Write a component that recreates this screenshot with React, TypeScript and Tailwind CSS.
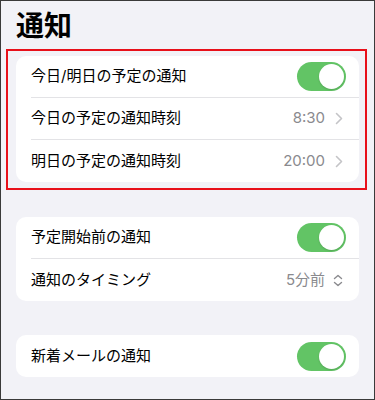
import React from "react";

const font = { fontFamily: 'Inter, "Noto Sans CJK JP", sans-serif' };

function Toggle() {
  return (
    <div className="w-[49px] h-[29px] rounded-full bg-[#62c465] flex items-center justify-end px-[2px]">
      <div className="w-[25px] h-[25px] rounded-full bg-white shadow-[0_1px_2px_rgba(0,0,0,0.15)]" />
    </div>
  );
}

function Chevron() {
  return (
    <svg width="8" height="13" viewBox="0 0 8 13" className="ml-[10px]">
      <path d="M1.5 1.5 L6.5 6.5 L1.5 11.5" fill="none" stroke="#c4c4c7" strokeWidth="1.6" strokeLinecap="round" strokeLinejoin="round" />
    </svg>
  );
}

function UpDown() {
  return (
    <svg width="10" height="13" viewBox="0 0 10 13" className="ml-[8px]">
      <path d="M1.5 4.5 L5 1.5 L8.5 4.5 M1.5 8.5 L5 11.5 L8.5 8.5" fill="none" stroke="#8a8a8e" strokeWidth="1.4" strokeLinecap="round" strokeLinejoin="round" />
    </svg>
  );
}

function Row({ label, right, last, pr = "pr-[16px]" }: { label: string; right: React.ReactNode; last?: boolean; pr?: string }) {
  return (
    <div className="pl-[15px]">
      <div className={`h-[42px] flex items-center justify-between ${pr} ${last ? "" : "border-b border-[#e3e3e6]"}`}>
        <span className="text-[15px] text-black">{label}</span>
        <div className="flex items-center">{right}</div>
      </div>
    </div>
  );
}

export default function App() {
  return (
    <div className="w-[375px] h-[400px] bg-[#f2f2f7] border border-[#3a3a3a] overflow-hidden" style={font}>
      <div className="pt-[8px] pl-[15px]">
        <h1 className="text-[28px] leading-[34px] font-bold text-black">通知</h1>
      </div>

      <div className="relative mx-[15px] mt-[13px]">
        <div className="absolute -left-[10px] -top-[7px] -right-[8px] -bottom-[8px] border-2 border-[#e8101a] pointer-events-none" />
        <div className="bg-white rounded-[10px]">
          <Row label="今日/明日の予定の通知" right={<Toggle />} pr="pr-[13px]" />
          <Row
            label="今日の予定の通知時刻"
            right={
              <>
                <span className="text-[15px] text-[#8a8a8e]">8:30</span>
                <Chevron />
              </>
            }
          />
          <Row
            label="明日の予定の通知時刻"
            last
            right={
              <>
                <span className="text-[15px] text-[#8a8a8e]">20:00</span>
                <Chevron />
              </>
            }
          />
        </div>
      </div>

      <div className="mx-[15px] mt-[35px] bg-white rounded-[10px]">
        <Row label="予定開始前の通知" right={<Toggle />} pr="pr-[13px]" />
        <Row
          label="通知のタイミング"
          last
          right={
            <>
              <span className="text-[15px] text-[#8a8a8e]">5分前</span>
              <UpDown />
            </>
          }
        />
      </div>

      <div className="mx-[15px] mt-[34px] bg-white rounded-[10px]">
        <Row label="新着メールの通知" right={<Toggle />} pr="pr-[13px]" last />
      </div>
    </div>
  );
}
